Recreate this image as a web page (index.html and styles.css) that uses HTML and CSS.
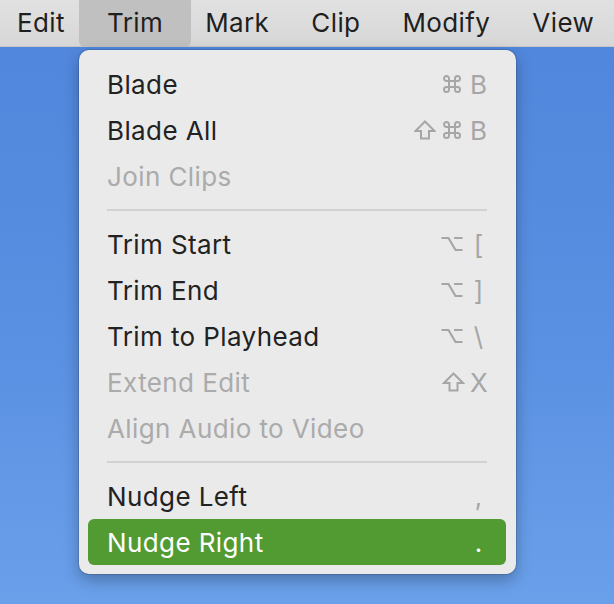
FILE: index.html
```html
<!DOCTYPE html>
<html>
<head>
<meta charset="utf-8">
<link rel="stylesheet" href="styles.css">
</head>
<body>
<div class="desktop">
  <div class="menubar">
    <span class="mb-item first">Edit</span>
    <span class="mb-item active">Trim</span>
    <span class="mb-item">Mark</span>
    <span class="mb-item">Clip</span>
    <span class="mb-item">Modify</span>
    <span class="mb-item">View</span>
  </div>
  <div class="menu">
    <div class="row"><span class="label">Blade</span><span class="sc">
      <svg class="ic cmd" viewBox="0 0 20 20"><path d="M7 7V4.5a2.5 2.5 0 1 0-2.5 2.5H7Zm0 0h6m-6 0v6m6-6V4.5A2.5 2.5 0 1 1 15.5 7H13Zm0 0v6m0 0h2.5a2.5 2.5 0 1 1-2.5 2.5V13Zm0 0H7m0 0v2.5A2.5 2.5 0 1 1 4.5 13H7Z"/></svg>
      <span class="key">B</span></span></div>
    <div class="row"><span class="label">Blade All</span><span class="sc">
      <svg class="ic shift" viewBox="0 0 22 20"><path d="M11 1.5 20.5 11H15v7.5H7V11H1.5Z"/></svg>
      <svg class="ic cmd" viewBox="0 0 20 20"><path d="M7 7V4.5a2.5 2.5 0 1 0-2.5 2.5H7Zm0 0h6m-6 0v6m6-6V4.5A2.5 2.5 0 1 1 15.5 7H13Zm0 0v6m0 0h2.5a2.5 2.5 0 1 1-2.5 2.5V13Zm0 0H7m0 0v2.5A2.5 2.5 0 1 1 4.5 13H7Z"/></svg>
      <span class="key">B</span></span></div>
    <div class="row disabled"><span class="label">Join Clips</span></div>
    <div class="sep"></div>
    <div class="row"><span class="label">Trim Start</span><span class="sc">
      <svg class="ic opt" viewBox="0 0 22 16"><path d="M0.5 2H7.5L14.5 14H21.5M13 2H21.5"/></svg>
      <span class="key">[</span></span></div>
    <div class="row"><span class="label">Trim End</span><span class="sc">
      <svg class="ic opt" viewBox="0 0 22 16"><path d="M0.5 2H7.5L14.5 14H21.5M13 2H21.5"/></svg>
      <span class="key">]</span></span></div>
    <div class="row"><span class="label">Trim to Playhead</span><span class="sc">
      <svg class="ic opt" viewBox="0 0 22 16"><path d="M0.5 2H7.5L14.5 14H21.5M13 2H21.5"/></svg>
      <span class="key">\</span></span></div>
    <div class="row disabled"><span class="label">Extend Edit</span><span class="sc">
      <svg class="ic shift x" viewBox="0 0 22 20"><path d="M11 1.5 20.5 11H15v7.5H7V11H1.5Z"/></svg>
      <span class="key">X</span></span></div>
    <div class="row disabled"><span class="label">Align Audio to Video</span></div>
    <div class="sep"></div>
    <div class="row"><span class="label">Nudge Left</span><span class="sc"><span class="key">,</span></span></div>
    <div class="row selected"><span class="label">Nudge Right</span><span class="sc"><span class="key">.</span></span></div>
  </div>
</div>
</body>
</html>
```

FILE: styles.css
```css
html, body {
  margin: 0;
  padding: 0;
}
body {
  width: 614px;
  height: 604px;
  overflow: hidden;
  font-family: Inter, "Noto Sans", "DejaVu Sans", sans-serif;
}
.desktop {
  width: 614px;
  height: 604px;
  background: linear-gradient(180deg, #4f85db 0%, #5b91e2 60%, #6aa0ea 100%);
  position: relative;
}
.menubar {
  height: 47px;
  display: flex;
  align-items: center;
  background: linear-gradient(180deg, #e1e1e1, #d7d7d7);
  border-bottom: 1px solid #c8c8c8;
  box-sizing: border-box;
  font-size: 26px;
  letter-spacing: 0.4px;
  color: #1f1f1f;
  white-space: nowrap;
}
.mb-item {
  height: 47px;
  line-height: 46px;
  padding: 0 21px;
}
.mb-item.first {
  padding-left: 17px;
}
.mb-item.active {
  padding: 0 28px;
  margin: 0 -7px;
  background: #c0c0c0;
  border-radius: 0 0 6px 6px;
}
.menu {
  position: absolute;
  left: 79px;
  top: 50px;
  width: 437px;
  box-sizing: border-box;
  padding: 11px 10px 9px 9px;
  background: #eaeaea;
  border-radius: 10px;
  box-shadow: 0 0 0 1px rgba(0, 0, 0, 0.12), 0 6px 16px rgba(0, 0, 0, 0.28);
  font-size: 26px;
  letter-spacing: 0.4px;
}
.row {
  height: 46px;
  display: flex;
  align-items: center;
  justify-content: space-between;
  padding: 0 19px;
  color: #222222;
  border-radius: 6px;
}
.row.disabled {
  color: #ababab;
}
.row.selected {
  background: #529a32;
  color: #ffffff;
}
.sc {
  display: flex;
  align-items: center;
  color: #a6a6a6;
}
.row.selected .sc {
  color: #ffffff;
}
.ic {
  fill: none;
  stroke: currentColor;
  stroke-width: 2;
  margin-right: 7px;
}
.cmd {
  width: 20px;
  height: 20px;
  margin-right: 8px;
}
.shift {
  width: 22px;
  height: 20px;
  margin-right: 6px;
}
.shift.x {
  width: 23px;
  margin-right: 5px;
}
.opt {
  width: 22px;
  height: 16px;
  stroke-width: 2.2;
}
.key {
  width: 17px;
  text-align: center;
  letter-spacing: 0;
}
.sep {
  height: 2px;
  margin: 10px 19px;
  background: #d2d2d2;
}
```
